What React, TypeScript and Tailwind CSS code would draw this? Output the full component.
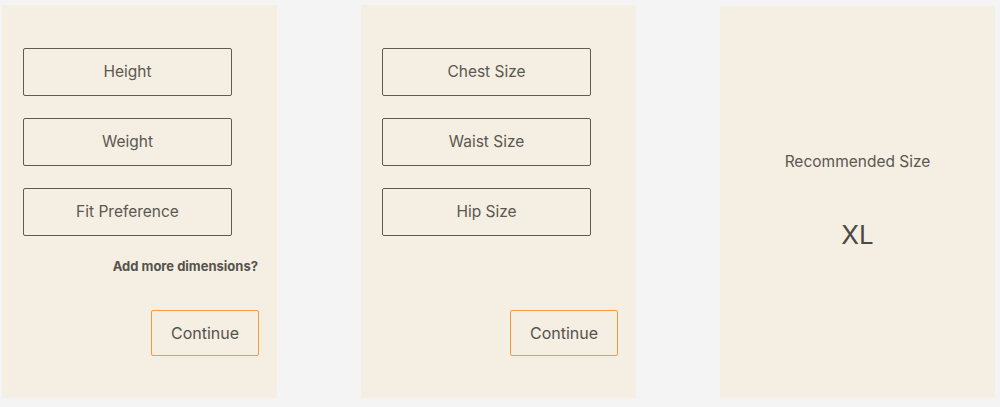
import React from "react";

const font = { fontFamily: "Inter, 'Noto Sans', sans-serif" };

function Field({ label }: { label: string }) {
  return (
    <div className="w-[209px] h-[48px] shrink-0 flex items-center justify-center border border-[#5f5b52] rounded-[2px] text-[15.5px] text-[#5b5850]">
      {label}
    </div>
  );
}

function ContinueButton({ className }: { className?: string }) {
  return (
    <button className={"self-end w-[108px] h-[46px] flex items-center justify-center border border-[#f79a3c] rounded-[2px] text-[16px] text-[#55534c] " + (className ?? "")}>
      Continue
    </button>
  );
}

export default function App() {
  return (
    <div className="w-[1000px] h-[407px] bg-[#f4f4f4] flex gap-[84px] pt-[5px] pl-[2px]" style={font}>
      {/* Step 1: body basics */}
      <div className="w-[275px] h-[393px] bg-[#f4eee3] flex flex-col pt-[43px] pl-[21px] pr-[18px]">
        <div className="flex flex-col gap-[22px]">
          <Field label="Height" />
          <Field label="Weight" />
          <Field label="Fit Preference" />
        </div>
        <span className="self-end mt-[22px] pr-[1px] text-[13px] leading-[16px] font-bold text-[#55534c]">Add more dimensions?</span>
        <ContinueButton className="mt-[36px]" />
      </div>

      {/* Step 2: measurements */}
      <div className="w-[275px] h-[393px] bg-[#f4eee3] flex flex-col pt-[43px] pl-[21px] pr-[18px]">
        <div className="flex flex-col gap-[22px]">
          <Field label="Chest Size" />
          <Field label="Waist Size" />
          <Field label="Hip Size" />
        </div>
        <ContinueButton className="mt-[74px]" />
      </div>

      {/* Step 3: result */}
      <div className="w-[275px] h-[392px] mt-[1px] bg-[#f4eee3] flex flex-col items-center pt-[146px]">
        <span className="text-[15.5px] leading-[20px] text-[#5b5850]">Recommended Size</span>
        <span className="mt-[47px] text-[26px] leading-[32px] text-[#4a4943]">XL</span>
      </div>
    </div>
  );
}
